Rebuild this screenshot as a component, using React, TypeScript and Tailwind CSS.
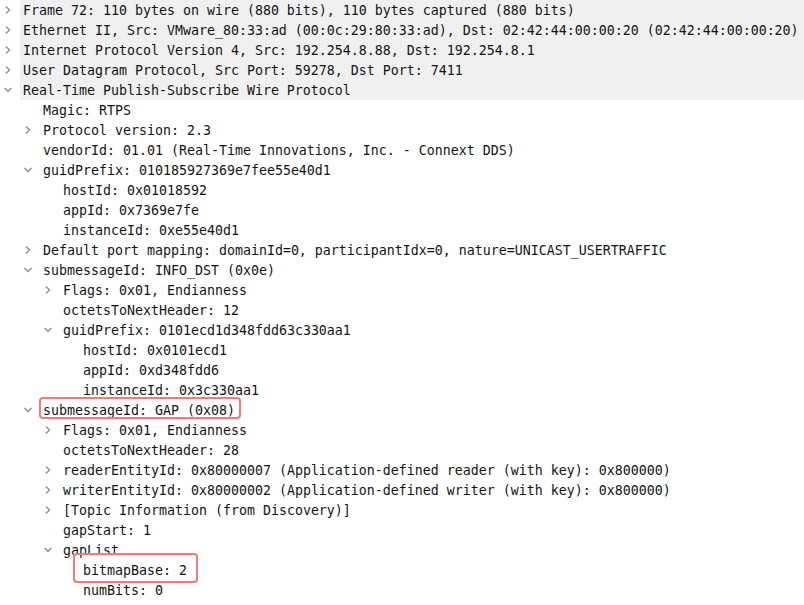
import { ReactNode } from 'react';

type Row = {
  text: string;
  level: number;
  arrow?: 'closed' | 'open';
  mark?: 'gap' | 'bitmap';
};

const rows: Row[] = [
  { text: 'Frame 72: 110 bytes on wire (880 bits), 110 bytes captured (880 bits)', level: 0, arrow: 'closed' },
  { text: 'Ethernet II, Src: VMware_80:33:ad (00:0c:29:80:33:ad), Dst: 02:42:44:00:00:20 (02:42:44:00:00:20)', level: 0, arrow: 'closed' },
  { text: 'Internet Protocol Version 4, Src: 192.254.8.88, Dst: 192.254.8.1', level: 0, arrow: 'closed' },
  { text: 'User Datagram Protocol, Src Port: 59278, Dst Port: 7411', level: 0, arrow: 'closed' },
  { text: 'Real-Time Publish-Subscribe Wire Protocol', level: 0, arrow: 'open' },
  { text: 'Magic: RTPS', level: 1 },
  { text: 'Protocol version: 2.3', level: 1, arrow: 'closed' },
  { text: 'vendorId: 01.01 (Real-Time Innovations, Inc. - Connext DDS)', level: 1 },
  { text: 'guidPrefix: 010185927369e7fee55e40d1', level: 1, arrow: 'open' },
  { text: 'hostId: 0x01018592', level: 2 },
  { text: 'appId: 0x7369e7fe', level: 2 },
  { text: 'instanceId: 0xe55e40d1', level: 2 },
  { text: 'Default port mapping: domainId=0, participantIdx=0, nature=UNICAST_USERTRAFFIC', level: 1, arrow: 'closed' },
  { text: 'submessageId: INFO_DST (0x0e)', level: 1, arrow: 'open' },
  { text: 'Flags: 0x01, Endianness', level: 2, arrow: 'closed' },
  { text: 'octetsToNextHeader: 12', level: 2 },
  { text: 'guidPrefix: 0101ecd1d348fdd63c330aa1', level: 2, arrow: 'open' },
  { text: 'hostId: 0x0101ecd1', level: 3 },
  { text: 'appId: 0xd348fdd6', level: 3 },
  { text: 'instanceId: 0x3c330aa1', level: 3 },
  { text: 'submessageId: GAP (0x08)', level: 1, arrow: 'open', mark: 'gap' },
  { text: 'Flags: 0x01, Endianness', level: 2, arrow: 'closed' },
  { text: 'octetsToNextHeader: 28', level: 2 },
  { text: 'readerEntityId: 0x80000007 (Application-defined reader (with key): 0x800000)', level: 2, arrow: 'closed' },
  { text: 'writerEntityId: 0x80000002 (Application-defined writer (with key): 0x800000)', level: 2, arrow: 'closed' },
  { text: '[Topic Information (from Discovery)]', level: 2, arrow: 'closed' },
  { text: 'gapStart: 1', level: 2 },
  { text: 'gapList', level: 2, arrow: 'open' },
  { text: 'bitmapBase: 2', level: 3, mark: 'bitmap' },
  { text: 'numBits: 0', level: 3 },
];

const indent = ['w-0', 'w-5', 'w-10', 'w-15'];

function Arrow({ kind }: { kind?: 'closed' | 'open' }) {
  if (!kind) return null;
  return (
    <svg width="10" height="10" viewBox="0 0 10 10" className="text-[#8a8a8a]">
      {kind === 'closed' ? (
        <path d="M3 1.5 L6.5 5 L3 8.5" fill="none" stroke="currentColor" strokeWidth="1.3" />
      ) : (
        <path d="M1.5 3 L5 6.5 L8.5 3" fill="none" stroke="currentColor" strokeWidth="1.3" />
      )}
    </svg>
  );
}

function Mark({ kind }: { kind?: 'gap' | 'bitmap' }): ReactNode {
  if (kind === 'gap')
    return <div className="absolute left-[-4px] top-[-3px] w-[202px] h-[22px] rounded-[4px] border-2 border-[#ef7b7b] pointer-events-none" />;
  if (kind === 'bitmap')
    return <div className="absolute left-[-10px] top-[-7px] w-[125px] h-[30px] rounded-[4px] border-2 border-[#ef7b7b] pointer-events-none" />;
  return null;
}

export default function App() {
  return (
    <div className="w-[804px] h-[605px] overflow-hidden bg-white text-[#141414] text-[13.29px] leading-5 font-['DejaVu_Sans_Mono',monospace]">
      {rows.map((r, i) => (
        <div key={i} className={`flex h-5 items-center whitespace-nowrap ${i < 5 ? 'bg-[linear-gradient(to_right,white_20px,#f0f0f0_20px)]' : ''}`}>
          <div className={`shrink-0 ${indent[r.level]}`} />
          <div className="w-[23px] shrink-0 flex items-center pl-[3px]">
            <Arrow kind={r.arrow} />
          </div>
          <div className="relative h-5">
            <span className="relative top-px">{r.text}</span>
            <Mark kind={r.mark} />
          </div>
        </div>
      ))}
    </div>
  );
}
